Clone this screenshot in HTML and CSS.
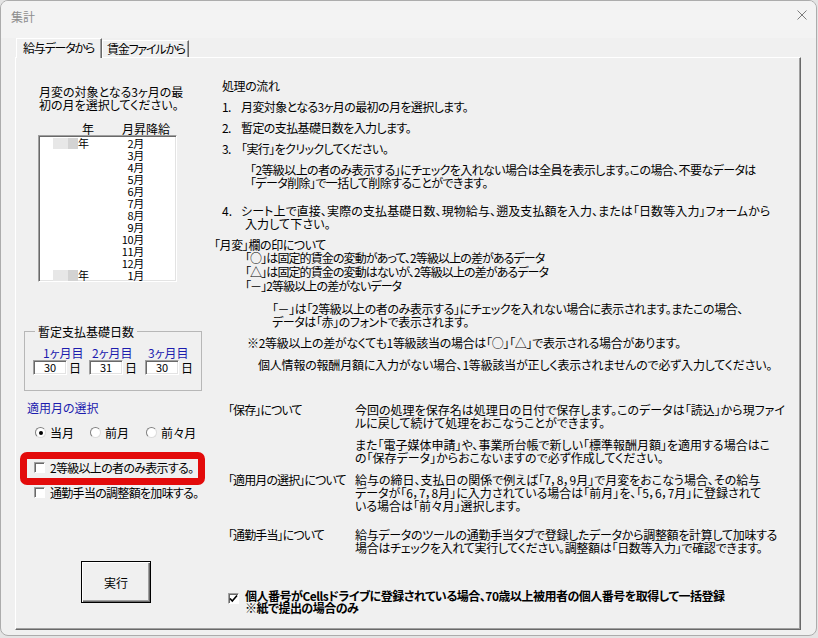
FILE: index.html
```html
<!DOCTYPE html>
<html lang="ja">
<head>
  <meta charset="UTF-8" />
  <title>集計</title>
  <link rel="stylesheet" href="styles.css">
</head>
<body>
  <div class="window">
    <div class="titlebar">
      <span class="title">集計</span>
      <svg class="close" width="10" height="10" viewBox="0 0 10 10"><path d="M0.5 0.5L9.5 9.5M9.5 0.5L0.5 9.5" stroke="#7c7c7c" stroke-width="1"/></svg>
    </div>
    <div class="tabs">
      <div class="tab active">給与データから</div>
      <div class="tab">賃金ファイルから</div>
    </div>
    <div class="panel">
      <div class="left">
        <p class="intro">月変の対象となる3ヶ月の最<br>初の月を選択してください。</p>
        <div class="list-head"><span>年</span><span>月昇降給</span></div>
        <div class="listbox">
          <div class="row"><span></span><span class="blur"></span><span>年</span><span class="m">2月</span></div>
          <div class="row"><span></span><span></span><span></span><span class="m">3月</span></div>
          <div class="row"><span></span><span></span><span></span><span class="m">4月</span></div>
          <div class="row"><span></span><span></span><span></span><span class="m">5月</span></div>
          <div class="row"><span></span><span></span><span></span><span class="m">6月</span></div>
          <div class="row"><span></span><span></span><span></span><span class="m">7月</span></div>
          <div class="row"><span></span><span></span><span></span><span class="m">8月</span></div>
          <div class="row"><span></span><span></span><span></span><span class="m">9月</span></div>
          <div class="row"><span></span><span></span><span></span><span class="m">10月</span></div>
          <div class="row"><span></span><span></span><span></span><span class="m">11月</span></div>
          <div class="row"><span></span><span></span><span></span><span class="m">12月</span></div>
          <div class="row"><span></span><span class="blur"></span><span>年</span><span class="m">1月</span></div>
        </div>

        <fieldset class="group">
          <legend>暫定支払基礎日数</legend>
          <div class="days">
            <div class="day">
              <span class="day-label first">1ヶ月目</span>
              <div class="field"><span class="num">30</span><span>日</span></div>
            </div>
            <div class="day">
              <span class="day-label">2ヶ月目</span>
              <div class="field"><span class="num">31</span><span>日</span></div>
            </div>
            <div class="day">
              <span class="day-label">3ヶ月目</span>
              <div class="field"><span class="num">30</span><span>日</span></div>
            </div>
          </div>
        </fieldset>

        <p class="apply-title">適用月の選択</p>
        <div class="radios">
          <label class="radio-item"><span class="radio checked"></span>当月</label>
          <label class="radio-item"><span class="radio"></span>前月</label>
          <label class="radio-item"><span class="radio"></span>前々月</label>
        </div>

        <label class="check-row marked"><span class="mark"></span><span class="check"></span>2等級以上の者のみ表示する。</label>
        <label class="check-row second"><span class="check"></span>通勤手当の調整額を加味する。</label>

        <button class="run">実行</button>
      </div>

      <div class="right">
        <p class="flow-title">処理の流れ</p>
        <div class="step"><span>1.</span><span>月変対象となる3ヶ月の最初の月を選択します。</span></div>
        <div class="step"><span>2.</span><span>暫定の支払基礎日数を入力します。</span></div>
        <div class="step"><span>3.</span><span>「実行」をクリックしてください。</span></div>
        <p class="step-note">「2等級以上の者のみ表示する」にチェックを入れない場合は全員を表示します。この場合、不要なデータは<br>「データ削除」で一括して削除することができます。</p>
        <div class="step step4"><span>4.</span><span>シート上で直接、実際の支払基礎日数、現物給与、遡及支払額を入力、または「日数等入力」フォームから<br><span class="cont">入力して下さい。</span></span></div>

        <p class="marks-title">「月変」欄の印について</p>
        <div class="marks">
          <p>「○」は固定的賃金の変動があって、2等級以上の差があるデータ</p>
          <p>「△」は固定的賃金の変動はないが、2等級以上の差があるデータ</p>
          <p>「－」2等級以上の差がないデータ</p>
        </div>
        <p class="marks-note">「－」は「2等級以上の者のみ表示する」にチェックを入れない場合に表示されます。またこの場合、<br>データは「赤」のフォントで表示されます。</p>
        <p class="note-a">※2等級以上の差がなくても1等級該当の場合は「○」「△」で表示される場合があります。</p>
        <p class="note-b">個人情報の報酬月額に入力がない場合、1等級該当が正しく表示されませんので必ず入力してください。</p>

        <div class="def save">
          <span class="def-label">「保存」について</span>
          <div>
            <p>今回の処理を保存名は処理日の日付で保存します。このデータは「読込」から現ファイ<br>ルに戻して続けて処理をおこなうことができます。</p>
            <p class="more">また「電子媒体申請」や、事業所台帳で新しい「標準報酬月額」を適用する場合はこ<br>の「保存データ」からおこないますので必ず作成してください。</p>
          </div>
        </div>
        <div class="def apply">
          <span class="def-label">「適用月の選択」について</span>
          <p>給与の締日、支払日の関係で例えば「7，8，9月」で月変をおこなう場合、その給与<br>データが「6，7，8月」に入力されている場合は「前月」を、「5，6，7月」に登録されて<br>いる場合は「前々月」選択します。</p>
        </div>
        <div class="def commute">
          <span class="def-label">「通勤手当」について</span>
          <p>給与データのツールの通勤手当タブで登録したデータから調整額を計算して加味する<br>場合はチェックを入れて実行してください。調整額は「日数等入力」で確認できます。</p>
        </div>

        <label class="bottom-check">
          <span class="check on"><svg width="9" height="9" viewBox="0 0 9 9"><path d="M1 4.5L3.3 7L8 1.5" fill="none" stroke="#000" stroke-width="1.6"/></svg></span>
          <span>個人番号がCellsドライブに登録されている場合、70歳以上被用者の個人番号を取得して一括登録<br>※紙で提出の場合のみ</span>
        </label>
      </div>
    </div>
  </div>
</body>
</html>
```

FILE: styles.css
```css
:root {
  --face: #f0f0f0;
  --shadow: #a0a0a0;
  --dark: #696969;
  --blue: #1c1cae;
}
* { box-sizing: border-box; margin: 0; padding: 0; }
body {
  background: #e4e4e4;
  font-family: 'Noto Sans CJK JP', 'Noto Sans', sans-serif;
  font-size: 12px;
  line-height: 13px;
  color: #000;
  font-feature-settings: "palt";
}
p { white-space: nowrap; }

.window {
  width: 817px;
  height: 636px;
  background: var(--face);
  border: 1px solid #acacac;
  border-radius: 8px;
  overflow: hidden;
}
.titlebar {
  height: 37px;
  display: flex;
  justify-content: space-between;
  align-items: flex-start;
  padding: 9px 9px 0 10px;
  background: #f3f3f3;
}
.title { color: #8e8e8e; }

/* tabs */
.tabs {
  display: flex;
  align-items: flex-end;
  height: 20px;
  margin: 0 0 -1px 15px;
}
.tab {
  width: 87px;
  height: 17px;
  margin-bottom: 1px;
  padding: 1px 0 0 4px;
  border-top: 1px solid #fff;
  border-left: 1px solid #fff;
  border-right: 1px solid var(--dark);
  box-shadow: inset -1px 0 var(--shadow);
  letter-spacing: -1.2px;
  white-space: nowrap;
  overflow: hidden;
}
.tab.active {
  position: relative;
  z-index: 1;
  width: 86px;
  height: 20px;
  margin-bottom: 0;
  padding: 2px 0 0 6px;
  background: var(--face);
}

/* panel */
.panel {
  display: flex;
  width: 786px;
  height: 573px;
  margin-left: 14px;
  border: 1px solid var(--dark);
  border-top-color: #fff;
  border-left-color: #fff;
  box-shadow: inset -1px -1px var(--shadow);
}
.left {
  width: 196px;
  flex: none;
  display: flex;
  flex-direction: column;
  align-items: flex-start;
}
.right { flex: 1; }

/* left column */
.intro { margin: 27px 0 0 23px; }
.list-head {
  display: grid;
  grid-template-columns: 40px auto;
  margin: 11px 0 0 66px;
}
.listbox {
  width: 139px;
  height: 147px;
  margin-left: 22px;
  padding: 1px 0 0 1px;
  background: #fff;
  border: 1px solid #fff;
  border-top-color: var(--shadow);
  border-left-color: var(--shadow);
  box-shadow: inset 1px 1px var(--dark), inset -1px -1px #e3e3e3;
}
.row {
  display: grid;
  grid-template-columns: 13px 25px 13px 53px;
  align-items: center;
  height: 12px;
  font-size: 11px;
  line-height: 12px;
}
.row .m { text-align: right; letter-spacing: -0.3px; }
.blur {
  height: 11px;
  background: linear-gradient(90deg, #e7e7e7 0 60%, #d3d3d3 60% 100%);
}

.group {
  width: 174px;
  margin: 43px 0 0 8px;
  padding: 0 0 15px 8px;
  border: 1px solid #b7b7b7;
}
.group legend {
  margin-left: 2px;
  padding: 0 3px;
}
.days {
  display: grid;
  grid-template-columns: 56px 56px 56px;
  margin-top: 8px;
}
.day-label {
  display: block;
  padding-left: 3px;
  color: var(--blue);
}
.day-label.first { padding-left: 10px; }
.field {
  display: flex;
  align-items: center;
  gap: 2px;
  margin-top: 1px;
}
.num {
  width: 34px;
  height: 15px;
  font-size: 11px;
  line-height: 12px;
  text-align: center;
  background: #fff;
  border: 1px solid #fff;
  border-top-color: var(--shadow);
  border-left-color: var(--shadow);
  box-shadow: inset 1px 1px var(--dark), inset -1px -1px #e3e3e3;
}

.apply-title {
  margin: 10px 0 0 11px;
  color: var(--blue);
}
.radios {
  display: grid;
  grid-template-columns: 55px 56px auto;
  margin: 12px 0 0 19px;
}
.radio-item {
  display: flex;
  align-items: center;
  gap: 4px;
  white-space: nowrap;
}
.radio {
  display: flex;
  align-items: center;
  justify-content: center;
  width: 11px;
  height: 11px;
  border-radius: 50%;
  background: #fff;
  border: 1px solid #dcdcdc;
  border-top-color: #808080;
  border-left-color: #808080;
}
.radio.checked::after {
  content: '';
  width: 4px;
  height: 4px;
  border-radius: 50%;
  background: #000;
}

.check-row {
  position: relative;
  display: flex;
  align-items: center;
  gap: 5px;
  margin: 22px 0 0 18px;
  letter-spacing: -0.7px;
  white-space: nowrap;
}
.check-row.second { margin-top: 12px; }
.check {
  display: flex;
  align-items: center;
  justify-content: center;
  width: 11px;
  height: 11px;
  flex: none;
  background: #fff;
  border: 1px solid #fff;
  border-top-color: var(--shadow);
  border-left-color: var(--shadow);
  box-shadow: inset 1px 1px var(--dark);
}
.mark {
  position: absolute;
  left: -14px;
  top: -9px;
  width: 185px;
  height: 33px;
  border: 7px solid #e30b0b;
  border-radius: 7px;
}

.run {
  width: 70px;
  height: 42px;
  margin: 62px 0 0 65px;
  font: inherit;
  background: var(--face);
  border: 1px solid #000;
  box-shadow: inset 1px 1px #fff, inset -1px -1px var(--dark), inset -2px -2px var(--shadow);
}

/* right column */
.flow-title { margin: 21px 0 0 10px; letter-spacing: -0.4px; }
.step {
  display: grid;
  grid-template-columns: 19px auto;
  margin: 8px 0 0 10px;
  letter-spacing: -0.6px;
  white-space: nowrap;
}
.step-note { margin: 8px 0 0 38px; letter-spacing: -0.6px; }
.step.step4 { margin-top: 15px; letter-spacing: 0.1px; }
.cont { padding-left: 4px; }
.marks-title { margin: 8px 0 0 2px; letter-spacing: -0.4px; }
.marks { margin-left: 33px; line-height: 14px; letter-spacing: -0.9px; }
.marks-note { margin: 9px 0 0 60px; letter-spacing: -0.4px; }
.note-a { margin: 8px 0 0 35px; letter-spacing: -0.3px; }
.note-b { margin: 9px 0 0 46px; letter-spacing: -0.2px; }

.def {
  display: grid;
  grid-template-columns: 127px auto;
  margin: 9px 0 0 16px;
  white-space: nowrap;
}
.def-label { letter-spacing: -0.9px; }
.def.save { margin-top: 32px; }
.def.commute { margin-top: 16px; }
.def.commute p { letter-spacing: -0.3px; }
.def .more { margin-top: 9px; }

.bottom-check {
  display: flex;
  align-items: flex-start;
  gap: 6px;
  margin: 36px 0 0 16px;
  font-weight: bold;
  line-height: 12px;
  letter-spacing: -0.5px;
  white-space: nowrap;
}
.bottom-check .check { margin-top: 3px; letter-spacing: 0; }
```
